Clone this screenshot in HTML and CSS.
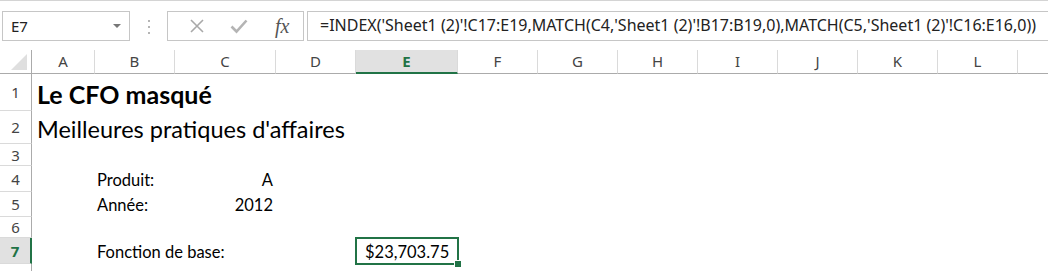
FILE: index.html
```html
<!DOCTYPE html>
<html lang="fr">
<head>
    <meta charset="UTF-8">
    <title>Le CFO masqué</title>
    <link rel="stylesheet" href="styles.css">
</head>
<body>
    <div class="toolbar">
        <div class="name-box">
            <span>E7</span>
            <span class="drop"></span>
        </div>
        <div class="grip"><i></i><i></i><i></i></div>
        <div class="fx-buttons">
            <svg width="16" height="16" viewBox="0 0 16 16"><path d="M2 2 L14 14 M14 2 L2 14" stroke="#a9a9a9" stroke-width="1.6" fill="none"/></svg>
            <svg width="18" height="16" viewBox="0 0 18 16"><path d="M1.5 8.5 L6.5 13.5 L16.5 2.5" stroke="#b4b4b4" stroke-width="2.6" fill="none"/></svg>
            <span class="fx">fx</span>
        </div>
        <div class="formula">=INDEX('Sheet1 (2)'!C17:E19,MATCH(C4,'Sheet1 (2)'!B17:B19,0),MATCH(C5,'Sheet1 (2)'!C16:E16,0))</div>
    </div>

    <div class="sheet">
        <!-- en-têtes de colonnes -->
        <div class="corner"><span></span></div>
        <div class="col-head">A</div>
        <div class="col-head">B</div>
        <div class="col-head">C</div>
        <div class="col-head">D</div>
        <div class="col-head active">E</div>
        <div class="col-head">F</div>
        <div class="col-head">G</div>
        <div class="col-head">H</div>
        <div class="col-head">I</div>
        <div class="col-head">J</div>
        <div class="col-head">K</div>
        <div class="col-head">L</div>
        <div class="col-head last"></div>

        <!-- en-têtes de lignes -->
        <div class="row-head r1">1</div>
        <div class="row-head r2">2</div>
        <div class="row-head r3">3</div>
        <div class="row-head r4">4</div>
        <div class="row-head r5">5</div>
        <div class="row-head r6">6</div>
        <div class="row-head r7 active">7</div>
        <div class="row-head r8"></div>

        <!-- cellules -->
        <div class="cell title r1">Le CFO masqué</div>
        <div class="cell subtitle r2">Meilleures pratiques d'affaires</div>
        <div class="cell label r4">Produit:</div>
        <div class="cell value r4">A</div>
        <div class="cell label r5">Année:</div>
        <div class="cell value r5">2012</div>
        <div class="cell label r7">Fonction de base:</div>
        <div class="cell money r7 selected"><span>$</span><span>23,703.75</span></div>
    </div>
</body>
</html>
```

FILE: styles.css
```css
body {
    margin: 0;
    background-color: #fff;
    font-family: "Noto Sans", "Open Sans", sans-serif;
    overflow: hidden;
}
.toolbar {
    height: 50px;
    border-top: 1px solid #d4d4d4;
    display: flex;
    align-items: flex-start;
    padding-top: 10px;
    padding-left: 2px;
    box-sizing: border-box;
}
.name-box {
    width: 128px;
    height: 30px;
    border: 1px solid #c6c6c6;
    box-sizing: border-box;
    display: flex;
    align-items: center;
    justify-content: space-between;
    padding: 0 8px 0 8px;
    font-size: 15px;
    color: #222;
}
.drop {
    width: 0;
    height: 0;
    border-left: 4px solid transparent;
    border-right: 4px solid transparent;
    border-top: 4px solid #777;
}
.grip {
    width: 37px;
    display: flex;
    flex-direction: column;
    align-items: center;
    gap: 4px;
    padding-top: 9px;
}
.grip i {
    width: 2px;
    height: 2px;
    background-color: #b5b5b5;
}
.fx-buttons {
    width: 137px;
    height: 30px;
    border: 1px solid #c6c6c6;
    box-sizing: border-box;
    display: flex;
    align-items: center;
    padding-left: 21px;
    gap: 25px;
}
.fx {
    font-family: "Liberation Serif", serif;
    font-style: italic;
    font-size: 20px;
    color: #555;
    margin-left: 2px;
}
.formula {
    flex: 1;
    height: 30px;
    margin-left: 3px;
    border: 1px solid #c6c6c6;
    border-right: none;
    box-sizing: border-box;
    padding-left: 12px;
    font-size: 16px;
    line-height: 27px;
    color: #222;
    white-space: nowrap;
    overflow: hidden;
}

.sheet {
    display: grid;
    grid-template-columns: 32px 63px 80px 101px 80px 102px 80px 80px 80px 80px 80px 80px 80px 1fr;
    grid-template-rows: 24px 37px 33px 22px 26px 25px 21px 26px 20px;
}
.corner {
    grid-column: 1;
    grid-row: 1;
    border-right: 1px solid #ababab;
    border-bottom: 1px solid #ababab;
    position: relative;
}
.corner span {
    position: absolute;
    right: 4px;
    bottom: 3px;
    width: 0;
    height: 0;
    border-left: 16px solid transparent;
    border-bottom: 16px solid #dfdfdf;
}
.col-head {
    grid-row: 1;
    border-right: 1px solid #dadada;
    border-bottom: 1px solid #ababab;
    text-align: center;
    font-size: 15px;
    line-height: 23px;
    color: #444;
}
.col-head.last {
    border-right: none;
}
.col-head.active {
    background-color: #e1e1e1;
    border-bottom: 2px solid #217346;
    color: #217346;
    font-weight: bold;
    line-height: 22px;
}
.row-head {
    grid-column: 1;
    border-right: 1px solid #ababab;
    border-bottom: 1px solid #dadada;
    text-align: center;
    font-size: 15px;
    color: #444;
    display: flex;
    align-items: center;
    justify-content: center;
}
.row-head.active {
    background-color: #e1e1e1;
    border-right: 2px solid #217346;
    color: #217346;
    font-weight: bold;
}
.r1 { grid-row: 2; }
.r2 { grid-row: 3; }
.r3 { grid-row: 4; }
.r4 { grid-row: 5; }
.r5 { grid-row: 6; }
.r6 { grid-row: 7; }
.r7 { grid-row: 8; }
.r8 { grid-row: 9; }

.cell {
    font-family: Lato, "Liberation Sans", sans-serif;
    color: #000;
    white-space: nowrap;
    display: flex;
    align-items: flex-end;
    padding: 0 3px 3px 3px;
}
.title {
    grid-column: 2 / span 5;
    font-size: 25px;
    font-weight: bold;
    padding-left: 5px;
    padding-bottom: 2px;
}
.subtitle {
    grid-column: 2 / span 5;
    font-size: 23.5px;
    padding-left: 5px;
    padding-bottom: 1px;
}
.label {
    grid-column: 3 / span 2;
    font-size: 16.5px;
    padding-left: 2px;
    padding-bottom: 2px;
}
.value {
    grid-column: 4;
    font-size: 16.5px;
    justify-content: flex-end;
    padding-bottom: 2px;
}
.money {
    grid-column: 6;
    font-size: 16.5px;
    justify-content: space-between;
    padding-left: 9px;
    padding-right: 10px;
    padding-bottom: 2px;
    position: relative;
}
.selected::after {
    content: "";
    position: absolute;
    left: -1px;
    top: -1px;
    right: -1px;
    bottom: -1px;
    border: 2px solid #217346;
}
.selected::before {
    content: "";
    position: absolute;
    right: -4px;
    bottom: -4px;
    width: 6px;
    height: 6px;
    background-color: #217346;
    border: 1px solid #fff;
    z-index: 1;
}
```
